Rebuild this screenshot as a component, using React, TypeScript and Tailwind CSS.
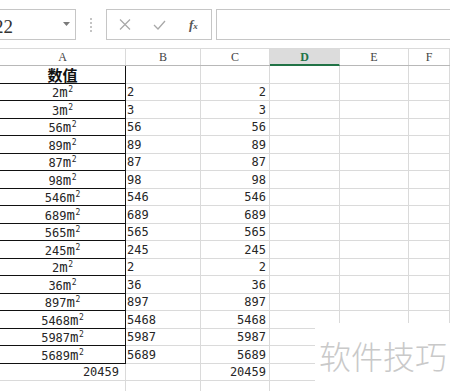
import React from 'react';

const VALUES = [2, 3, 56, 89, 87, 98, 546, 689, 565, 245, 2, 36, 897, 5468, 5987, 5689];
const TOTAL = VALUES.reduce((a, b) => a + b, 0);

const COL_W = ['w-[126px]', 'w-[75px]', 'w-[69px]', 'w-[70px]', 'w-[69px]', 'flex-1'];
const HEADERS = ['A', 'B', 'C', 'D', 'E', 'F'];

const cellFont = { fontFamily: '"DejaVu Sans Mono", "Noto Sans CJK SC", monospace' };

function Toolbar() {
  return (
    <div className="h-[48px] flex items-start pt-[9px] overflow-hidden">
      {/* name box */}
      <div className="-ml-[2px] w-[78px] h-[31px] shrink-0 border border-[#c6c6c6] flex items-center justify-between pr-[5px] overflow-hidden">
        <span
          className="-ml-[5px] text-[19px] leading-none text-[#333] pt-[3px]"
          style={{ fontFamily: '"Liberation Serif", serif' }}
        >
          22
        </span>
        <svg width="7" height="4" viewBox="0 0 7 4" className="mt-[-1px]">
          <path d="M0 0 L7 0 L3.5 4 Z" fill="#7a7a7a" />
        </svg>
      </div>
      {/* separator */}
      <div className="w-[30px] h-[31px] shrink-0 flex items-center justify-center">
        <svg width="2" height="14" viewBox="0 0 2 14">
          <rect x="0" y="0" width="2" height="2" fill="#c4c4c4" />
          <rect x="0" y="4" width="2" height="2" fill="#c4c4c4" />
          <rect x="0" y="8" width="2" height="2" fill="#c4c4c4" />
          <rect x="0" y="12" width="2" height="2" fill="#c4c4c4" />
        </svg>
      </div>
      {/* cancel / enter / fx */}
      <div className="w-[106px] h-[31px] shrink-0 border border-[#c6c6c6] flex items-center">
        <svg width="12" height="11" viewBox="0 0 12 11" className="ml-[12px]">
          <path d="M1 0.5 L11 10.5 M11 0.5 L1 10.5" stroke="#a8a8a8" strokeWidth="1.2" fill="none" />
        </svg>
        <svg width="13" height="10" viewBox="0 0 13 10" className="ml-[22px]">
          <path d="M1 5 L5 9 L12 1" stroke="#a8a8a8" strokeWidth="1.3" fill="none" />
        </svg>
        <span
          className="ml-[23px] text-[13px] italic leading-none text-[#555] font-bold"
          style={{ fontFamily: '"Liberation Serif", serif' }}
        >
          f<span className="text-[9px]">x</span>
        </span>
      </div>
      {/* formula input */}
      <div className="ml-[4px] flex-1 -mr-[4px] h-[31px] border border-[#c6c6c6]" />
    </div>
  );
}

function HeaderRow() {
  return (
    <div className="flex h-[18px] border-t border-[#dadada] border-b border-b-[#b8b8b8]">
      {HEADERS.map((h, i) => {
        const active = h === 'D';
        return (
          <div
            key={h}
            className={`${COL_W[i]} shrink-0 flex items-center justify-center border-r ${
              active
                ? 'bg-[#dcdcdc] border-[#dcdcdc] text-[#217346] font-bold border-b-2 border-b-[#217346] mb-[-1px]'
                : 'border-[#dadada] text-[#444]'
            } text-[12px] leading-none`}
            style={{ fontFamily: '"Liberation Serif", serif' }}
          >
            {h}
          </div>
        );
      })}
    </div>
  );
}

type RowProps = {
  idx: number;
  a: React.ReactNode;
  b?: React.ReactNode;
  c?: React.ReactNode;
  boxed: boolean;
  aAlign?: 'center' | 'right';
};

function Row({ idx, a, b, c, boxed, aAlign = 'center' }: RowProps) {
  const h = idx % 2 === 0 ? 'h-[18px]' : 'h-[17px]';
  const grid = 'border-r border-b border-[#dadada]';
  return (
    <div className={`flex ${h}`} style={cellFont}>
      <div
        className={`${COL_W[0]} shrink-0 flex items-center ${
          aAlign === 'center' ? 'justify-center' : 'justify-end pr-[6px]'
        } border-r border-b ${boxed ? 'border-[#111]' : 'border-[#dadada]'} text-[12px] leading-none text-[#262626]`}
      >
        {a}
      </div>
      <div className={`${COL_W[1]} shrink-0 flex items-center pl-[1px] ${grid} text-[12px] leading-none text-[#262626]`}>
        {b}
      </div>
      <div className={`${COL_W[2]} shrink-0 flex items-center justify-end pr-[3px] ${grid} text-[12px] leading-none text-[#262626]`}>
        {c}
      </div>
      <div className={`${COL_W[3]} shrink-0 ${grid}`} />
      <div className={`${COL_W[4]} shrink-0 ${grid}`} />
      <div className={`${COL_W[5]} ${grid}`} />
    </div>
  );
}

function Area({ v }: { v: number }) {
  return (
    <span className="flex items-baseline leading-none">
      <span>{v}</span>
      <span className="text-[14px] tracking-[-0.5px]">m</span>
      <span className="ml-[1px] text-[8px] relative -top-[5px]">2</span>
    </span>
  );
}

export default function App() {
  return (
    <div className="relative w-[450px] h-[391px] overflow-hidden bg-white">
      <Toolbar />
      <HeaderRow />
      <Row
        idx={0}
        boxed
        a={
          <span
            className="text-[15px] leading-none font-bold text-[#111]"
            style={{ fontFamily: '"Noto Sans CJK SC", sans-serif' }}
          >
            数值
          </span>
        }
      />
      {VALUES.map((v, i) => (
        <Row key={i} idx={i + 1} boxed a={<Area v={v} />} b={v} c={v} />
      ))}
      <Row idx={17} boxed={false} a={TOTAL} c={TOTAL} aAlign="right" />
      <Row idx={18} boxed={false} a="" />

      {/* watermark */}
      <div className="absolute left-[315px] top-[323px] right-0 bottom-0 bg-white">
        <div
          className="absolute left-[4px] top-[16px] text-[32px] leading-none font-light text-[#c9c9c9] whitespace-nowrap"
          style={{ fontFamily: '"Noto Sans CJK SC", sans-serif' }}
        >
          软件技巧
        </div>
      </div>
    </div>
  );
}
